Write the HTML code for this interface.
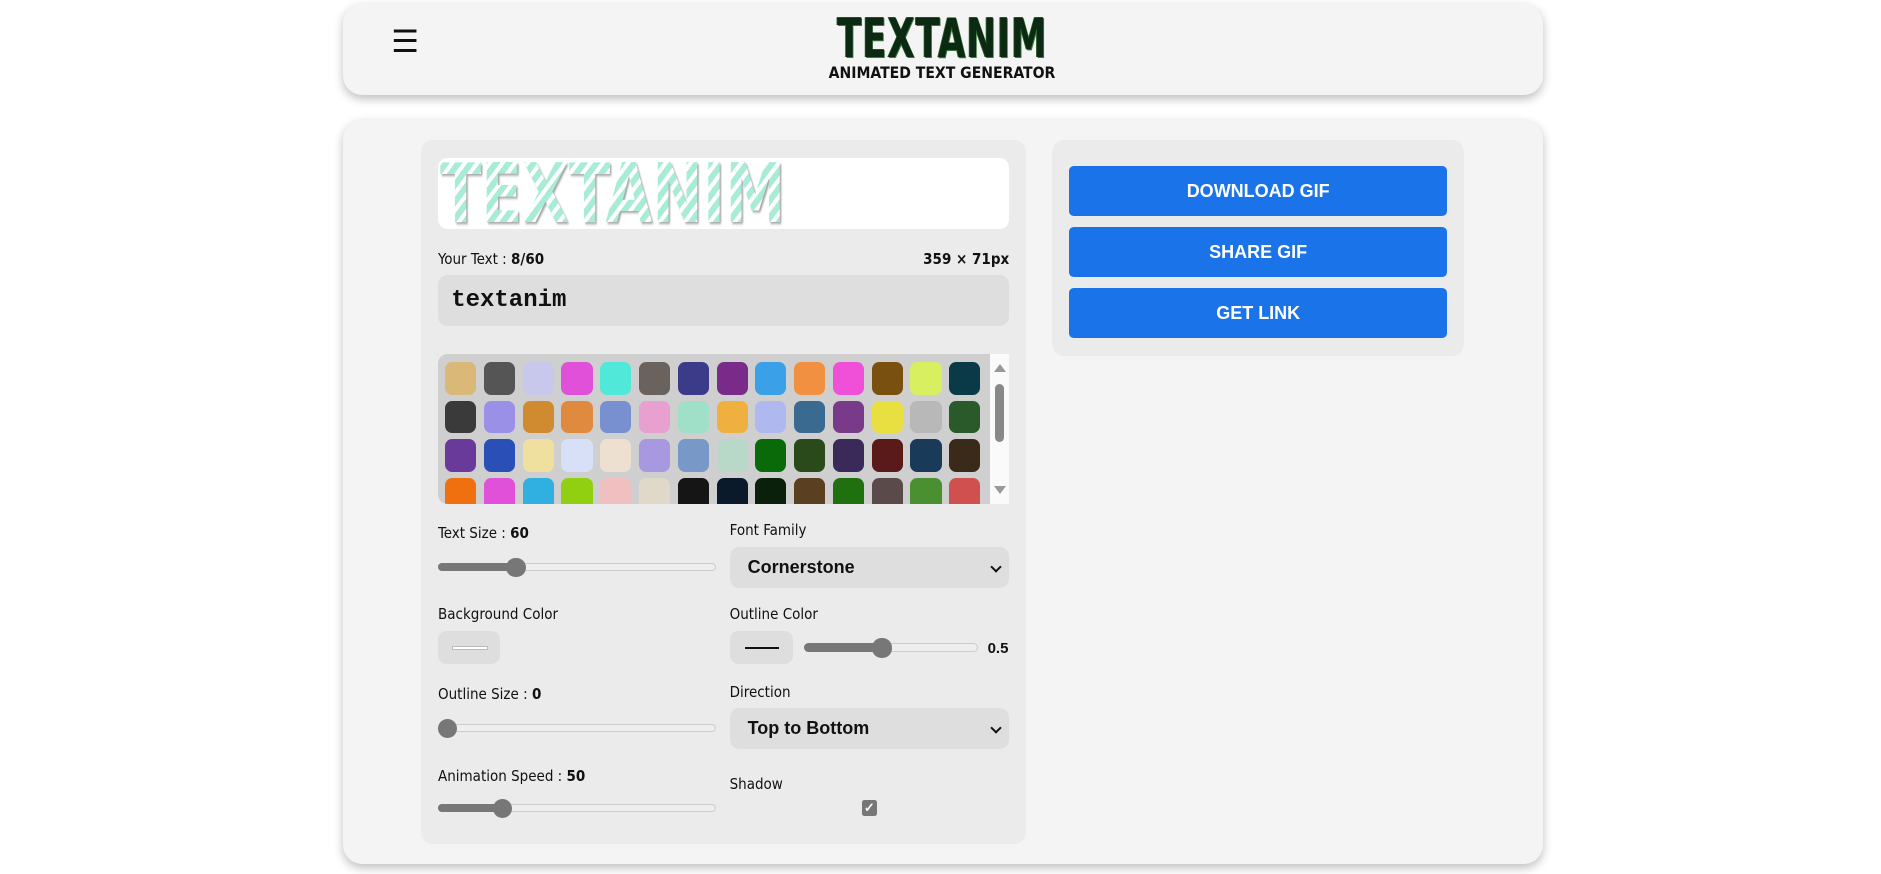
<!DOCTYPE html>
<html><head><meta charset="utf-8">
<style>
html,body{margin:0;padding:0;background:#fff;overflow:hidden}
body{zoom:1.2;width:1568px;height:728px;position:relative;font-family:"Liberation Sans",sans-serif;color:#111}
.a{position:absolute}
.card{background:#f4f4f4;border-radius:16px;box-shadow:0 3px 8px rgba(0,0,0,.25)}
.panel{background:#ebebeb;border-radius:10px}
.lbl{font-family:"DejaVu Sans Condensed","Liberation Sans Narrow","Liberation Sans",sans-serif;font-size:12.5px;color:#111}
.lbl b{font-weight:bold}
.sel{background:#dedede;border-radius:8px;font-weight:bold;font-size:15px;line-height:34px;padding-left:15px;box-sizing:border-box}
.sel:after{content:"";position:absolute;right:8px;top:13px;width:5px;height:5px;border-right:2px solid #111;border-bottom:2px solid #111;transform:rotate(45deg)}
.track{height:7px;background:#eee;border:1px solid #ccc;border-radius:5px;box-sizing:border-box}
.fill{height:7px;background:#777;border-radius:5px}
.thumb{width:16px;height:16px;background:#777;border-radius:50%}
.btn{background:#1a73e8;border-radius:4px;color:#fff;font-weight:bold;font-size:15px;text-align:center;line-height:42px;width:315px;height:42px;left:891px}
.tile{position:absolute;width:26px;height:27px;border-radius:6px}
</style></head><body>
<div class="a card" style="left:286px;top:3px;width:1000px;height:76px"></div>
<div class="a" style="left:326px;top:24px;font-size:26px;line-height:22px">☰</div>
<div class="a" style="left:640px;top:9px;width:290px;text-align:center">
 <div style="display:inline-block;font-family:'DejaVu Sans',sans-serif;font-weight:bold;font-size:45px;line-height:46px;color:#0c2a12;transform:scaleX(0.66);letter-spacing:1px;text-shadow:1px 1px 0 #3a7a40,-1px 0 0 #2a5a2a">TEXTANIM</div>
</div>
<div class="a" style="left:640px;top:53px;width:290px;text-align:center;font-weight:bold;font-size:13px;font-family:'DejaVu Sans Condensed','Liberation Sans',sans-serif">ANIMATED TEXT GENERATOR</div>

<div class="a card" style="left:286px;top:100px;width:1000px;height:620px"></div>
<div class="a panel" style="left:351px;top:117px;width:504px;height:586px"></div>
<div class="a" style="left:365px;top:132px;width:476px;height:59px;background:#fff;border-radius:8px;overflow:hidden">
 <div style="position:absolute;left:2px;top:-8px;font-family:'DejaVu Sans',sans-serif;font-weight:bold;font-size:68px;line-height:76px;transform:scaleX(0.74);transform-origin:left;background:repeating-linear-gradient(135deg,#a8ecd8 0 6px,#fff 6px 10px);-webkit-background-clip:text;background-clip:text;color:transparent;filter:drop-shadow(2px 2px 1px rgba(0,0,0,.35))">TEXTANIM</div>
</div>
<div class="a lbl" style="left:365px;top:208px">Your Text : <b>8/60</b></div>
<div class="a lbl" style="left:700px;width:141px;text-align:right;top:208px"><b>359 × 71px</b></div>
<div class="a" style="left:365px;top:229px;width:476px;height:43px;background:#dedede;border-radius:8px;font-family:'Liberation Mono',monospace;font-weight:bold;font-size:20px;line-height:43px;padding-left:11px;box-sizing:border-box">textanim</div>

<div class="a" style="left:365px;top:295px;width:476px;height:125px;background:#cfcfcf;border-radius:8px 0 0 8px;overflow:hidden" id="g"></div>
<div class="a" style="left:825px;top:295px;width:16px;height:125px;background:#fafafa"></div>
<div class="a" style="left:828px;top:303px;width:0;height:0;border-left:5px solid transparent;border-right:5px solid transparent;border-bottom:7px solid #999"></div>
<div class="a" style="left:829px;top:320px;width:8px;height:48px;background:#888;border-radius:4px"></div>
<div class="a" style="left:828px;top:405px;width:0;height:0;border-left:5px solid transparent;border-right:5px solid transparent;border-top:7px solid #999"></div>

<div class="a lbl" style="left:365px;top:437px">Text Size : <b>60</b></div>
<div class="a track" style="left:365px;top:469px;width:232px"></div><div class="a fill" style="left:365px;top:469px;width:64px"></div><div class="a thumb" style="left:422px;top:465px"></div>
<div class="a lbl" style="left:608px;top:434px">Font Family</div>
<div class="a sel" style="left:608px;top:456px;width:233px;height:34px">Cornerstone</div>

<div class="a lbl" style="left:365px;top:504px">Background Color</div>
<div class="a" style="left:365px;top:526px;width:52px;height:27px;background:#dedede;border-radius:7px"><div style="position:absolute;left:12px;top:12px;width:28px;height:2px;border:1px solid #bbb;background:#fff"></div></div>
<div class="a lbl" style="left:608px;top:504px">Outline Color</div>
<div class="a" style="left:608px;top:526px;width:53px;height:27px;background:#dedede;border-radius:7px"><div style="position:absolute;left:13px;top:13px;width:28px;height:2px;background:#111"></div></div>
<div class="a track" style="left:670px;top:536px;width:145px"></div><div class="a fill" style="left:670px;top:536px;width:65px"></div><div class="a thumb" style="left:727px;top:532px"></div>
<div class="a" style="left:823px;top:533px;font-weight:bold;font-size:12.5px">0.5</div>

<div class="a lbl" style="left:365px;top:571px">Outline Size : <b>0</b></div>
<div class="a track" style="left:365px;top:603px;width:232px"></div><div class="a thumb" style="left:365px;top:599px"></div>
<div class="a lbl" style="left:608px;top:569px">Direction</div>
<div class="a sel" style="left:608px;top:590px;width:233px;height:34px">Top to Bottom</div>

<div class="a lbl" style="left:365px;top:639px">Animation Speed : <b>50</b></div>
<div class="a track" style="left:365px;top:670px;width:232px"></div><div class="a fill" style="left:365px;top:670px;width:54px"></div><div class="a thumb" style="left:411px;top:666px"></div>
<div class="a lbl" style="left:608px;top:646px">Shadow</div>
<div class="a" style="left:718px;top:667px;width:13px;height:13px;background:#777;border-radius:2px;color:#fff;font-size:11px;line-height:13px;text-align:center;font-weight:bold">✓</div>

<div class="a panel" style="left:877px;top:117px;width:343px;height:180px"></div>
<div class="a btn" style="top:138px">DOWNLOAD GIF</div>
<div class="a btn" style="top:189px">SHARE GIF</div>
<div class="a btn" style="top:240px">GET LINK</div>

<script>
var c=["#d9b878","#555","#c8c8ec","#e050d8","#50e8d8","#6a625c","#3b3b8a","#7a2b8a","#3aa0e8","#f09040","#f050d8","#7a5010","#d8f060","#0a3a48",
"#3a3a3a","#9a90e8","#d08a30","#e08a40","#7890d0","#e8a0d0","#a0e0c8","#f0b040","#b0b8f0","#3a6a90","#7a3a8a","#e8e040","#b8b8b8","#2a5a2a",
"#6a3a9a","#2a50b8","#f0e0a0","#d8e0f8","#eee0d0","#a898e0","#7898c8","#b8d8c8","#0a6a0a","#2a4a1a","#3a2a5a","#5a1a1a","#1a3a5a","#3a2a1a",
"#f07010","#e050d8","#30b0e0","#90d010","#f0c0c0","#e0d8c8","#151515","#0a1a2a","#0a200a","#5a4020","#207010","#5a4a4a","#4a9030","#d05050"];
var g=document.getElementById('g'),h='';
for(var i=0;i<56;i++){var r=Math.floor(i/14),k=i%14;h+='<div class="tile" style="left:'+(6+k*32.3)+'px;top:'+(7+r*32)+'px;background:'+c[i]+'"></div>';}
g.innerHTML=h;
</script>
</body></html>
